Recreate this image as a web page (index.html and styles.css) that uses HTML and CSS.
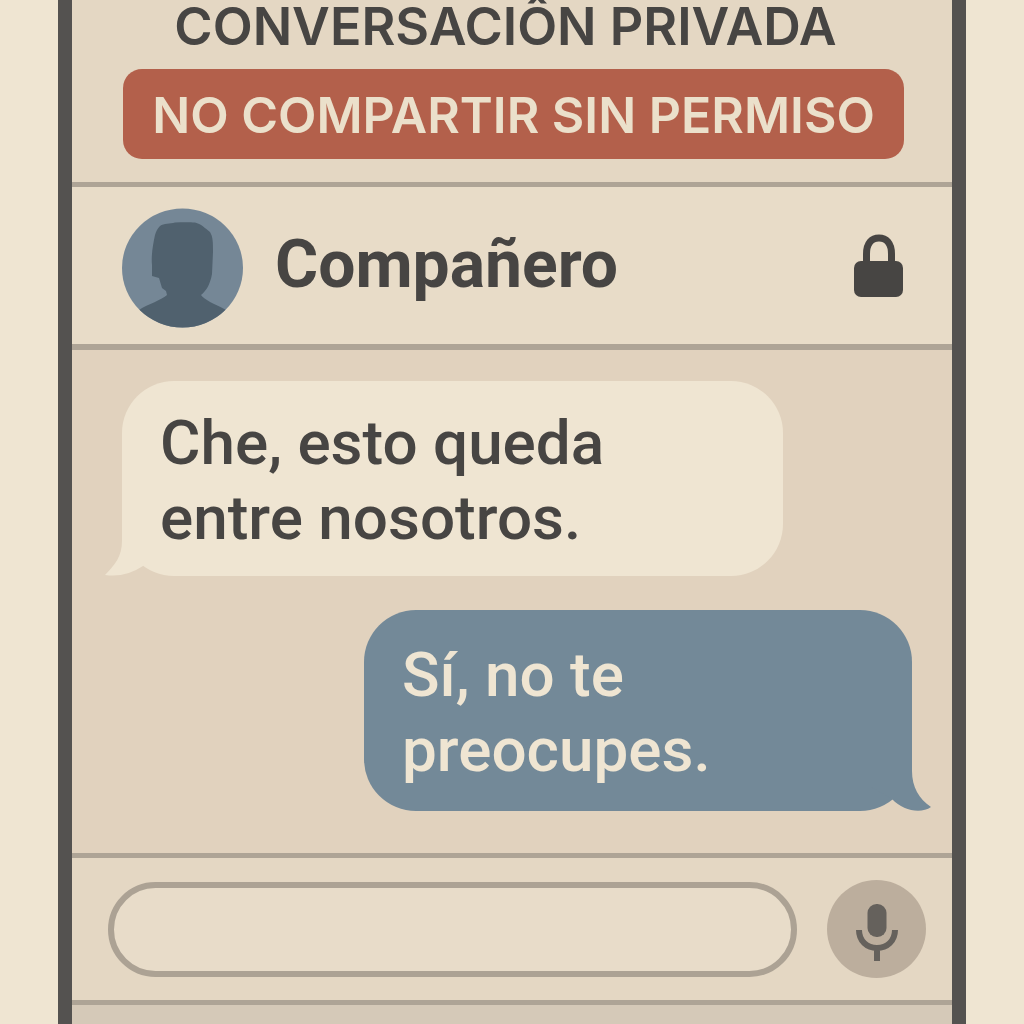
FILE: index.html
```html
<!DOCTYPE html>
<html lang="es">
<head>
<meta charset="utf-8">
<meta name="viewport" content="width=device-width, initial-scale=1">
<title>Conversación privada</title>
<link rel="stylesheet" href="styles.css">
</head>
<body>
<main class="phone">
  <header class="notice">
    <h1 class="notice-title">CONVERSACIÔN PRIVADA</h1>
    <p class="notice-banner">NO COMPARTIR SIN PERMISO</p>
  </header>

  <section class="contact">
    <svg class="avatar" viewBox="0 0 121 120" aria-hidden="true">
      <defs><clipPath id="disc"><ellipse cx="60.500" cy="60" rx="60.500" ry="59.500"/></clipPath></defs>
      <g clip-path="url(#disc)">
        <rect width="121" height="120" fill="#758796"/>
        <path fill="#50616e" d="M38 18C42 15 48 16 53 14.500C60 14 68 14 73 14.500C79 16 83 20 88 24C91 29 91 34 91 44L90 66C88 77 84 83 79 87C82 92 93 96 104 102L112 120H8L17 102C26 96 40 92 45 87L44 83L40 80L37 70L30 68L30 57C29 48 31 36 33 27C34 23 36 20 38 18Z"/>
      </g>
    </svg>
    <h2 class="contact-name">Compañero</h2>
    <svg class="lock" viewBox="0 0 50 68" aria-hidden="true">
      <path fill="none" stroke="#474543" stroke-width="7" d="M12.500 30V20C12.500 9 18 4 25 4S37.500 9 37.500 20V30"/>
      <rect y="27" width="49" height="36" rx="7" fill="#474543"/>
    </svg>
  </section>

  <section class="messages">
    <div class="bubble incoming">
      <p class="bubble-text">Che, esto queda entre nosotros.</p>
      <svg class="tail tail-left" viewBox="0 0 60 60" aria-hidden="true">
        <path d="M17 0V25C17 40 10 49 0 59Q20 62 38 50L48 43V0Z"/>
      </svg>
    </div>
    <div class="bubble outgoing">
      <p class="bubble-text">Sí, no te preocupes.</p>
      <svg class="tail tail-right" viewBox="0 0 60 60" aria-hidden="true">
        <path d="M41 0V20C41 36 48 48 60 56C50 63 32 60 21 48L0 36V0Z"/>
      </svg>
    </div>
  </section>

  <form class="composer">
    <input class="composer-input" type="text" aria-label="Mensaje">
    <button class="mic" type="button" aria-label="Grabar audio">
      <svg class="mic-icon" viewBox="0 0 44 60" aria-hidden="true">
        <rect x="12.500" y="1" width="19" height="33" rx="9" fill="#65615c"/>
        <path fill="none" stroke="#65615c" stroke-width="6" d="M4 27C4 38 12 45 22 45S40 38 40 27M22 45V58"/>
      </svg>
    </button>
  </form>
</main>
</body>
</html>
```
FILE: styles.css
```css
* {
  box-sizing: border-box;
}

body {
  margin: 0;
  background: #efe5d2;
  color: #474543;
  font-family: Roboto, "Liberation Sans", sans-serif;
}

.phone {
  display: flex;
  flex-direction: column;
  min-height: 100vh;
  margin: 0 58px;
  border: solid #545250;
  border-width: 0 14px;
  background: #d5c9b8;
}

.notice {
  padding: 0 48px 23px 51px;
  border-bottom: 5px solid #aea496;
  background: #e4d7c3;
  text-align: center;
}

.notice-title,
.notice-banner {
  margin: 0;
  font-family: Inter, Roboto, sans-serif;
  font-weight: 600;
  white-space: nowrap;
}

.notice-title {
  padding: 0 16px 15px 0;
  font-size: 52px;
  line-height: 54px;
}

.notice-banner {
  padding-top: 2px;
  border-radius: 19px;
  background: #b3604b;
  color: #ebe0cb;
  font-size: 50px;
  line-height: 88px;
}

.contact {
  display: flex;
  align-items: center;
  gap: 32px;
  height: 163px;
  padding: 4px 48px 0 50px;
  border-bottom: 6px solid #aea496;
  background: #e8dcc8;
}

.avatar {
  width: 121px;
  height: 120px;
}

.contact-name {
  flex: 1;
  margin: 0;
  padding-bottom: 6px;
  font-size: 66px;
  font-weight: 700;
  line-height: 80px;
}

.lock {
  width: 50px;
  height: 68px;
}

.messages {
  display: flex;
  flex-direction: column;
  gap: 34px;
  padding: 31px 40px 42px 50px;
  background: #e1d2be;
}

.bubble {
  position: relative;
  padding: 24px 38px 21px;
  border-radius: 52px;
}

.bubble-text {
  margin: 0;
  font-size: 62px;
  font-weight: 500;
  line-height: 75px;
}

.incoming {
  align-self: flex-start;
  width: 661px;
  max-width: 100%;
  background: #efe5d2;
}

.outgoing {
  align-self: flex-end;
  width: 548px;
  max-width: 100%;
  padding-top: 27px;
  padding-bottom: 24px;
  background: #738998;
  color: #efe5d2;
}

.tail {
  position: absolute;
  bottom: 0;
  width: 60px;
  height: 60px;
}

.tail-left {
  left: -17px;
  fill: #efe5d2;
}

.tail-right {
  right: -19px;
  fill: #738998;
}

.composer {
  display: flex;
  align-items: center;
  gap: 30px;
  padding: 22px 26px 22px 36px;
  border: solid #aea496;
  border-width: 5px 0;
  background: #e4d7c3;
}

.composer-input {
  flex: 1;
  min-width: 0;
  height: 95px;
  padding: 0 40px;
  border: 6px solid #aca294;
  border-radius: 48px;
  background: #e8dcc9;
  color: inherit;
  font: inherit;
  font-size: 40px;
}

.mic {
  display: flex;
  align-items: center;
  justify-content: center;
  width: 99px;
  height: 98px;
  padding: 8px 0 0;
  border: 0;
  border-radius: 50%;
  background: #bcae9d;
}

.mic-icon {
  width: 44px;
  height: 60px;
}
```
